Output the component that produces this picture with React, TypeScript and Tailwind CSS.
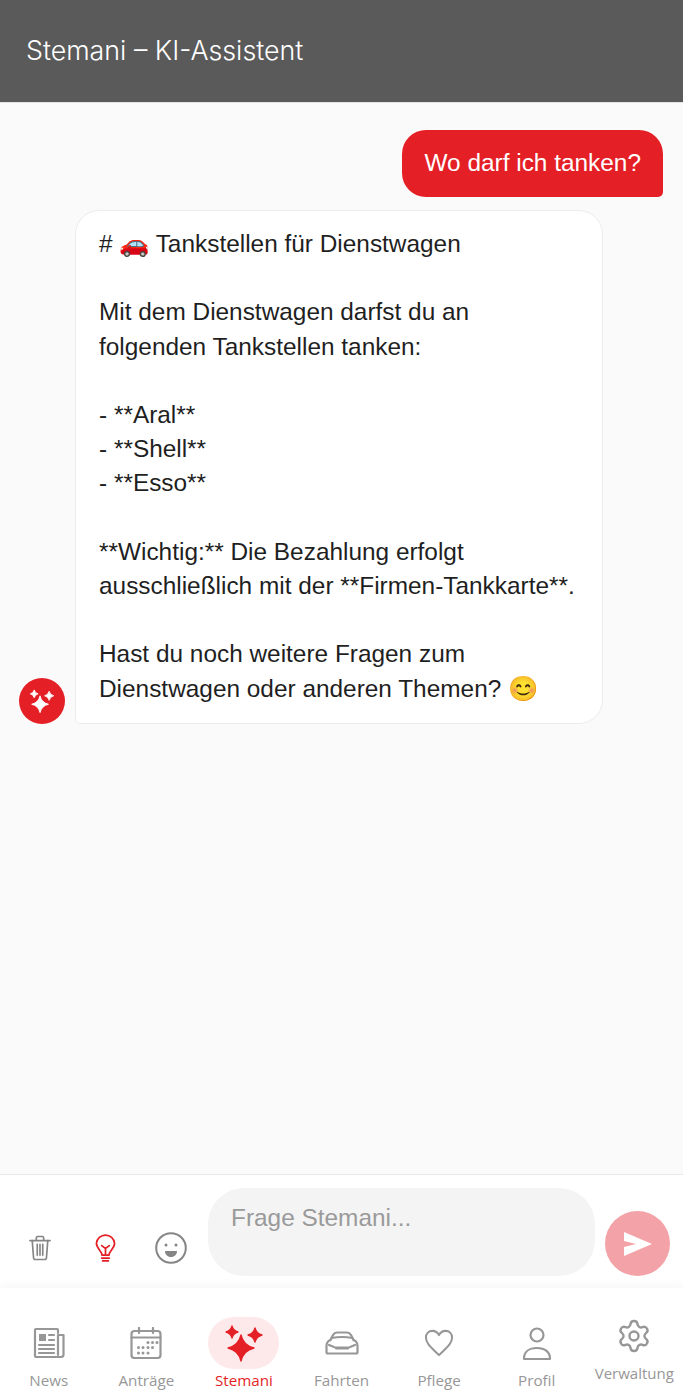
import { Settings } from "lucide-react";
import type { ReactNode } from "react";

const Sparkles = ({ className }: { className: string }) => (
  <svg viewBox="0 0 40 40" className={className} fill="currentColor" stroke="currentColor" strokeWidth="1.300" strokeLinejoin="round">
    <path d="M17 12Q19.400 22.600 30 25 19.400 27.400 17 38 14.600 27.400 4 25 14.600 22.600 17 12z" />
    <path d="M8 3Q9.200 7.800 14 9 9.200 10.200 8 15 6.800 10.200 2 9 6.800 7.800 8 3z" />
    <path d="M31 5Q32.400 10.600 38 12 32.400 13.400 31 19 29.600 13.400 24 12 29.600 10.600 31 5z" />
  </svg>
);

const NewsIcon = () => (
  <svg viewBox="0 0 32 32" className="h-[32px] w-[32px]" fill="none" stroke="currentColor" strokeWidth="2.200" strokeLinecap="round" strokeLinejoin="round">
    <path d="M25 6V3a1 1 0 0 0-1-1H3a1 1 0 0 0-1 1v26a1 1 0 0 0 1 1h25a2.500 2.500 0 0 0 2.500-2.500V8H25v20" />
    <rect x="6" y="7" width="7" height="7" fill="currentColor" stroke="none" />
    <path d="M16 8h5M16 13h5M6 18h15M6 22h15M6 26h15" />
  </svg>
);

const CalendarIcon = () => (
  <svg viewBox="0 0 32 32" className="h-[32px] w-[32px]" fill="none" stroke="currentColor" strokeWidth="2.200" strokeLinecap="round">
    <rect x="1.500" y="4" width="29" height="27" rx="3" />
    <path d="M1.500 10.500h29M9 1v5M23 1v5" />
    <g fill="currentColor" stroke="none">
      <circle cx="18" cy="15.500" r="1.500" /><circle cx="22.500" cy="15.500" r="1.500" /><circle cx="27" cy="15.500" r="1.500" />
      <circle cx="8.500" cy="20.500" r="1.500" /><circle cx="13" cy="20.500" r="1.500" /><circle cx="18" cy="20.500" r="1.500" /><circle cx="22.500" cy="20.500" r="1.500" />
      <circle cx="8.500" cy="26" r="1.500" /><circle cx="13" cy="26" r="1.500" /><circle cx="18" cy="26" r="1.500" />
    </g>
  </svg>
);

const CarIcon = () => (
  <svg viewBox="0 0 34 24" className="h-[24px] w-[34px]" fill="none" stroke="currentColor" strokeWidth="2.200" strokeLinecap="round" strokeLinejoin="round">
    <path d="M5.500 9 8 4Q9.500 1.500 12 1.500h10Q24.500 1.500 26 4L28.500 9" />
    <path d="M6.500 7Q17 5 27.500 7" />
    <path d="M5.500 9Q1.500 10.500 1.500 15v6q0 1.500 1.500 1.500h28q1.500 0 1.500-1.500v-6Q32.500 10.500 28.500 9" />
    <path d="M4 14l5 2M30 14l-5 2" />
    <path d="M11 17h12" strokeWidth="2.800" />
  </svg>
);

const HeartIcon = () => (
  <svg viewBox="0 0 32 30" className="h-[28px] w-[30px]" fill="none" stroke="currentColor" strokeWidth="2.200" strokeLinejoin="round">
    <path d="M16 28C9 21 2 16 2 9.500 2 5 5 2 9 2c3 0 5.500 1.500 7 4.500C17.500 3.500 20 2 23 2c4 0 7 3 7 7.500C30 16 23 21 16 28z" />
  </svg>
);

const PersonIcon = () => (
  <svg viewBox="0 0 30 33" className="h-[33px] w-[30px]" fill="none" stroke="currentColor" strokeWidth="2.200">
    <circle cx="15" cy="8" r="6.500" />
    <path d="M2 31.500c0-6.500 5-10.500 13-10.500s13 4 13 10.500c0 .5 0 .5-.5.5h-25c-.5 0-.5 0-.5-.5z" />
  </svg>
);

const TrashIcon = () => (
  <svg viewBox="0 0 24 28" className="h-[26px] w-[22px]" fill="none" stroke="currentColor" strokeWidth="1.800" strokeLinecap="round" strokeLinejoin="round">
    <path d="M1 6h22M8 6V3a1.500 1.500 0 0 1 1.500-1.500h5A1.500 1.500 0 0 1 16 3v3" />
    <path d="M3.500 6 5 25a1.500 1.500 0 0 0 1.500 1.500h11A1.500 1.500 0 0 0 19 25l1.500-19M9 10v12M12 10v12M15 10v12" />
  </svg>
);

const BulbIcon = () => (
  <svg viewBox="0 0 22 30" className="h-[29px] w-[21px]" fill="none" stroke="currentColor" strokeWidth="1.800" strokeLinecap="round">
    <path d="M7.500 22c0-4-6-7-6-12.500A9.500 9.500 0 0 1 11 1a9.500 9.500 0 0 1 9.500 8.500c0 5.500-6 8.500-6 12.500z" />
    <path d="M7 12l4 3 4-3M11 15v7M7 25h8M8 28h6" />
  </svg>
);

const SmileIcon = () => (
  <svg viewBox="0 0 32 32" className="h-[32px] w-[32px]">
    <circle cx="16" cy="16" r="14.800" fill="none" stroke="currentColor" strokeWidth="2" />
    <circle cx="11" cy="13" r="1.500" fill="currentColor" />
    <circle cx="21" cy="13" r="1.500" fill="currentColor" />
    <path d="M10 19h12c0 3.500-2.500 6-6 6s-6-2.500-6-6z" fill="currentColor" />
  </svg>
);

const SendIcon = () => (
  <svg viewBox="0 0 30 26" className="h-[26px] w-[30px]" fill="white">
    <path d="M1 1 29 13 1 25v-9l12-3-12-3z" />
  </svg>
);

const navItems: { label: string; icon: ReactNode }[] = [
  { label: "News", icon: <NewsIcon /> },
  { label: "Anträge", icon: <CalendarIcon /> },
  { label: "Fahrten", icon: <CarIcon /> },
  { label: "Pflege", icon: <HeartIcon /> },
  { label: "Profil", icon: <PersonIcon /> },
];

const NavItem = ({ label, icon }: { label: string; icon: ReactNode }) => (
  <div className="flex flex-1 flex-col items-center text-[#979797]">
    <div className="flex h-[52px] items-center justify-center">{icon}</div>
    <span className="mt-[1px] text-[15.200px] leading-[20px]">{label}</span>
  </div>
);

export default function App() {
  return (
    <div className="flex h-[1400px] flex-col bg-[#fafafa] font-['Liberation_Sans',sans-serif]">
      <header className="flex h-[103px] items-center border-b border-[#e2e2e2] bg-[#5a5a5a] px-[26px] pb-[2px] font-['Inter',sans-serif]">
        <h1 className="text-[26.800px] font-light text-white">Stemani – KI-Assistent</h1>
      </header>

      <main className="flex flex-1 flex-col px-[19px] pt-[27px]">
        <div className="flex justify-end pr-px">
          <div className="rounded-[24px] rounded-br-[5px] bg-[#e41f26] pb-[17px] pl-[22.500px] pr-[22px] pt-[15px] text-[24.400px] leading-[35px] text-white">
            Wo darf ich tanken?
          </div>
        </div>

        <div className="mt-[13px] flex items-end gap-[10px]">
          <div className="flex h-[46px] w-[46px] shrink-0 items-center justify-center rounded-full bg-[#e41f26] text-white">
            <Sparkles className="h-[26px] w-[26px]" />
          </div>
          <div className="w-[528px] rounded-[24px] rounded-bl-[5px] border border-[#ececec] bg-white px-[23px] pb-[17px] pt-[16px] text-[24.400px] leading-[34.200px] text-[#1f1f1f]">
            <p># 🚗 Tankstellen für Dienstwagen</p>
            <p className="mt-[34.200px]">Mit dem Dienstwagen darfst du an folgenden Tankstellen tanken:</p>
            <p className="mt-[34.200px]">- **Aral**</p>
            <p>- **Shell**</p>
            <p>- **Esso**</p>
            <p className="mt-[34.200px]">**Wichtig:** Die Bezahlung erfolgt ausschließlich mit der **Firmen-Tankkarte**.</p>
            <p className="mt-[34.200px]">Hast du noch weitere Fragen zum Dienstwagen oder anderen Themen? 😊</p>
          </div>
        </div>
      </main>

      <section className="flex h-[114px] items-end border-t border-[#e8e8e8] bg-white pb-[12px] pl-[29px] pr-[13px]">
        <div className="flex h-[46px] items-center gap-[42px] pb-[10px] text-[#858585]">
          <TrashIcon />
          <span className="ml-[2px] mr-[-3px] text-[#e41f26]"><BulbIcon /></span>
          <SmileIcon />
        </div>
        <div className="ml-[21px] h-[88px] w-[387px] rounded-[36px] bg-[#f4f4f4] px-[23px] pb-[11px] pt-[13px] text-[24.400px] leading-[34px] text-[#9a9a9a]">
          Frage Stemani...
        </div>
        <div className="ml-[10px] flex h-[65px] w-[65px] items-center justify-center rounded-full bg-[#f3a3a7]">
          <SendIcon />
        </div>
      </section>

      <nav className="flex h-[112px] bg-white pt-[29px] font-['Open_Sans',sans-serif] shadow-[0_-4px_8px_rgba(0,0,0,0.03)]">
        {navItems.slice(0, 2).map((item) => (
          <NavItem key={item.label} {...item} />
        ))}
        <div className="flex flex-1 flex-col items-center text-[#e41f26]">
          <div className="flex h-[52px] w-[71px] items-center justify-center rounded-[26px] bg-[#fde8ea]">
            <Sparkles className="h-[40px] w-[40px]" />
          </div>
          <span className="mt-[1px] text-[15.200px] leading-[20px]">Stemani</span>
        </div>
        {navItems.slice(2).map((item) => (
          <NavItem key={item.label} {...item} />
        ))}
        <div className="flex flex-1 flex-col items-center text-[#979797]">
          <div className="flex h-[38px] items-center justify-center">
            <Settings className="h-[36px] w-[36px]" strokeWidth={1.6} />
          </div>
          <span className="mt-[8px] text-[15px] leading-[20px]">Verwaltung</span>
        </div>
      </nav>
    </div>
  );
}
